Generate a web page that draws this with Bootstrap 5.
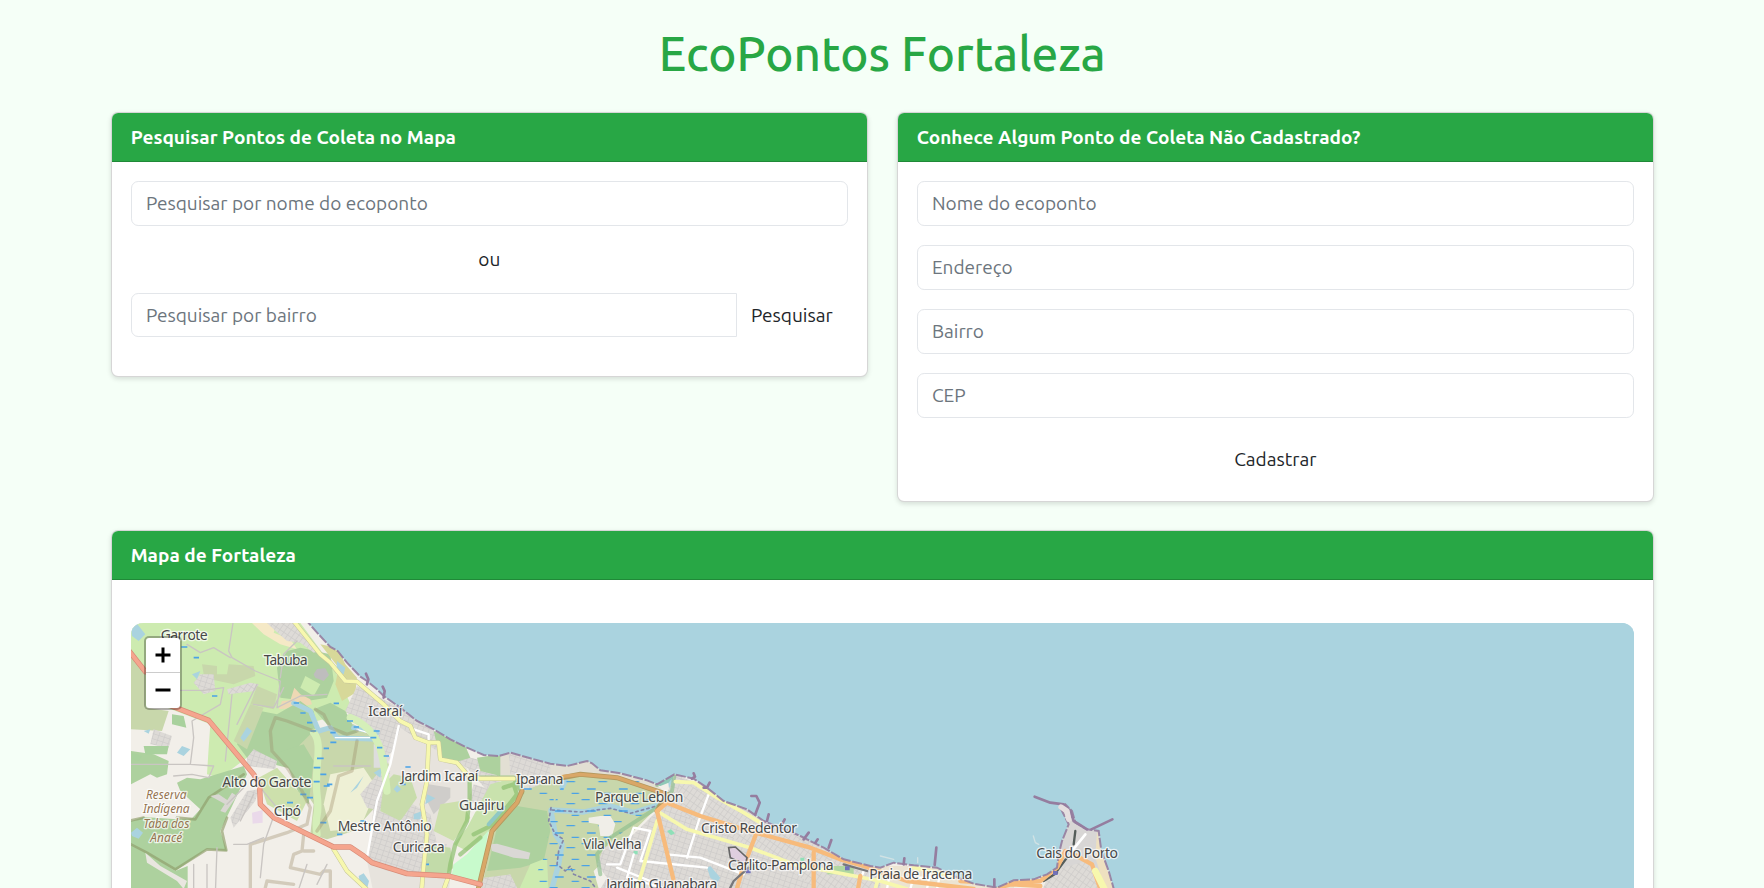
<!DOCTYPE html>
<html lang="pt-BR">
<head>
<meta charset="utf-8">
<meta name="viewport" content="width=device-width, initial-scale=1">
<title>EcoPontos Fortaleza</title>
<link rel="stylesheet" href="https://cdn.jsdelivr.net/npm/bootstrap@5.3.0/dist/css/bootstrap.min.css">
<style>
html{font-size:19.05px}
body{background:#f5fff7;font-family:Ubuntu,"Noto Sans",sans-serif;height:100vh;overflow:hidden;padding:25px 0 0 .6px;color:#212529}
.container{max-width:1572px}
h1{color:#28a745;font-size:2.505rem;margin-bottom:30.2px}
.card{border-color:rgba(0,0,0,.16);box-shadow:0 2px 5px rgba(0,0,0,.13)}
.card-header{background:#28a745;color:#fff;font-weight:600;letter-spacing:.03px}
.form-control{border-color:#e3e6ea}
.form-control::placeholder{color:#6c757d}
.map-box{height:595px;margin-top:24px;border-radius:12px;overflow:hidden;position:relative;background:#aad3df}
.map-box>svg{display:block;width:100%;height:266px;overflow:visible}
.zoom-ctl{position:absolute;left:13px;top:13px;width:38px;border:2px solid rgba(0,0,0,.28);border-radius:5px;background-clip:padding-box;background-color:#fff}
.zoom-ctl button{display:flex;align-items:center;justify-content:center;width:100%;height:35px;padding:0;border:0;background:none}
.zoom-ctl button:first-child{border-bottom:1px solid #ccc}
.place{font:42px "Noto Sans",sans-serif;fill:#484848;stroke:#fff;stroke-opacity:.7;stroke-width:8;paint-order:stroke;stroke-linejoin:round}
.place.reserve{font-size:36px;font-style:italic;fill:#967552}
.ln{fill:none;stroke-linecap:round;stroke-linejoin:round}
</style>
</head>
<body>
<main class="container">
<h1 class="text-center">EcoPontos Fortaleza</h1>
<div class="row">
 <div class="col-md-6">
  <div class="card">
   <div class="card-header">Pesquisar Pontos de Coleta no Mapa</div>
   <div class="card-body">
    <input class="form-control mb-3" placeholder="Pesquisar por nome do ecoponto">
    <p class="text-center mb-3">ou</p>
    <div class="input-group mb-3">
     <input class="form-control" placeholder="Pesquisar por bairro">
     <button class="btn" type="button">Pesquisar</button>
    </div>
   </div>
  </div>
 </div>
 <div class="col-md-6">
  <div class="card">
   <div class="card-header">Conhece Algum Ponto de Coleta Não Cadastrado?</div>
   <div class="card-body">
    <input class="form-control mb-3" placeholder="Nome do ecoponto">
    <input class="form-control mb-3" placeholder="Endereço">
    <input class="form-control mb-3" placeholder="Bairro">
    <input class="form-control mb-3" placeholder="CEP">
    <button class="btn w-100" type="button">Cadastrar</button>
   </div>
  </div>
 </div>
</div>
<div class="card mt-4">
 <div class="card-header">Mapa de Fortaleza</div>
 <div class="card-body">
  <div class="map-box">
<svg viewBox="92 336 4510 798" preserveAspectRatio="none">
<defs>
 <pattern id="streets" width="17" height="15" patternUnits="userSpaceOnUse" patternTransform="rotate(18)"><rect width="17" height="15" fill="#dddad6"/><path d="M0 0H17M0 0V15" stroke="#cdcbc9" stroke-width="4"/></pattern>
 <pattern id="streets2" width="14" height="19" patternUnits="userSpaceOnUse" patternTransform="rotate(35)"><rect width="14" height="19" fill="#dedbd7"/><path d="M0 0H14M0 0V19" stroke="#cdcbc9" stroke-width="4"/></pattern>
 <pattern id="marsh" width="96" height="66" patternUnits="userSpaceOnUse"><path d="M4 8H28M54 20H80M20 42H46M70 55H92" stroke="#4aa2e6" stroke-width="4"/></pattern>
 <clipPath id="coast"><path id="coastline" d="M60 300H592L625 336 655 370 690 408 712 420 740 455 780 497 800 510 830 535 850 555 900 590 950 630 1000 655 1050 685 1100 710 1150 732 1195 735 1230 725 1290 742 1350 758 1400 765 1460 750 1475 757 1500 778 1560 787 1640 808 1670 820 1722 790 1780 803 1820 830 1870 870 1940 895 1990 930 2040 950 2100 975 2170 1010 2230 1045 2310 1065 2340 1070 2380 1055 2440 1063 2510 1070 2560 1095 2620 1118 2690 1130 2740 1108 2800 1105 2840 1090 2870 1070 2875 1030 2885 990 2905 940 2880 890 2895 880 2915 900 2925 935 2960 955 2995 960 3003 1020 3025 1080 3045 1150H60Z"/></clipPath>
</defs>
<rect x="92" y="336" width="4510" height="798" fill="#aad3df"/>
<g clip-path="url(#coast)">
 <rect x="60" y="300" width="3100" height="850" fill="#f2efe9"/>
 <!-- western fields and woods -->
 <path d="M92 336H600L700 470 760 600 540 660 440 740 360 800 320 790 325 710 330 640 200 590H92Z" fill="#cdebb0"/>
 <path d="M92 430L135 490V590L205 600 185 660 92 655Z" fill="#c8d7ab"/>
 <path d="M455 336H530L520 365 570 385 590 415 540 400 490 370Z" fill="#f5e9c6"/>
 <path d="M530 470L560 420 600 410 690 430 700 510 680 560 620 570 540 560Z" fill="#add19e"/>
 <path d="M600 530L615 495 660 520 640 555Z" fill="#cdebb0"/>
 <path d="M640 490L650 474 675 472 686 492 670 510 645 500Z" fill="#bebdbd"/>
 <path d="M535 595L545 570 570 568 582 530 600 550 630 565 635 580 590 590Z" fill="#eed8b4"/>
 <path d="M305 460L350 465 350 490 380 490 385 460 460 465 465 495 400 520 330 505 310 490Z" fill="#c8d7ab"/>
 <path d="M300 490H340L345 540 310 550 280 515Z" fill="url(#streets)"/>
 <path d="M380 535L450 515 475 520 465 540 385 550Z" fill="url(#streets2)"/>
 <path d="M470 525L530 550 520 595 450 580Z" fill="#c8d7ab"/>
 <path d="M440 640L480 600 530 610 600 570 640 600 650 660 640 740 600 790 560 770 440 740 410 700Z" fill="#add19e"/>
 <path d="M400 690L450 580 490 590 440 715Z" fill="#c8d7ab"/>
 <path d="M640 660L760 640 850 700 870 780 860 850 760 960 680 985 630 970 640 880 560 760 600 700Z" fill="#c8d7ab"/>
 <path d="M640 595L690 575 735 600 770 665 730 675 680 640Z" fill="#add19e"/>
 <path d="M520 730L610 700 640 750 625 880 600 860 560 760Z" fill="#add19e"/>
 <path d="M475 800L530 770 620 870 590 930 500 880Z" fill="#cde0ac"/>
 <path d="M690 790L790 770 830 830 780 950 690 960 670 880Z" fill="#eef0d5"/>
 <path d="M820 700H850L870 740 855 770H820Z" fill="#dddddd"/>
 <path d="M500 336H590L660 420 640 425 600 395 560 390 515 350Z" fill="url(#streets2)"/>
 <path d="M660 400L710 410 735 460 770 500 765 545 725 570 705 520 715 470Z" fill="#d7d899"/>
 <path d="M710 450L735 470 730 490 708 480Z" fill="#aad3df"/>
 <path d="M770 525L900 590 1000 660 1110 740 1195 760 1200 850 1170 850 1100 770 1000 760 960 690 900 690 860 740 780 640 735 600Z" fill="url(#streets)"/>
 <path d="M900 650L960 690 1100 770 1110 870 1060 990 1045 1150H820L800 1050 840 850Z" fill="#e7e3dd"/>
 <path d="M780 850L830 790 870 780 845 900 800 890Z" fill="url(#streets)"/>
 <path d="M820 890L920 870 990 910 1010 1000 1040 1000 1020 1090 860 1080 800 1050Z" fill="url(#streets)"/>
 <path d="M850 820L880 790 930 800 950 860 900 930 840 900Z" fill="#c8dcab"/>
 <path d="M1000 660L1095 705 1110 740 1060 755 1020 745Z" fill="#add19e"/>
 <path d="M985 820L1050 830 1050 860 1000 910 975 860Z" fill="#cfcdca"/>
 <path d="M1020 880L1080 870 1110 920 1060 990 1000 960Z" fill="#cde0ac"/>
 <path d="M1120 820L1170 835 1160 870 1100 880Z" fill="url(#streets)"/>
 <path d="M980 1000L1050 1010 1060 1070 1030 1095 965 1085Z" fill="#c2dba9"/>
 <!-- indigenous reserve -->
 <path d="M92 720L160 730 205 750 200 790 170 800 150 790 92 820ZM230 815L260 800 300 805 430 765 440 790 360 960 380 1020 320 1015 225 1080 140 1030 92 1000V930L130 918 230 925 275 922 300 895 240 840Z" fill="#add19e"/>
 <path d="M92 1000L140 1025 225 1080 262 1065 262 1150H92Z" fill="#add19e"/>
 <path class="ln" d="M92 928L130 920M230 920L285 925 325 860 430 790M92 1000L140 1025 225 1075 320 1015 378 1018 365 960 380 920" stroke="#8f9d6a" stroke-opacity=".65" stroke-width="8"/>
 <path d="M160 655L215 675 205 710 150 700ZM440 740L460 715 530 750 525 775 440 765ZM390 920L440 840 475 835 465 870 400 950Z" fill="url(#streets)"/>
 <path d="M330 855L355 850 385 870 375 880ZM360 900L395 845 410 855 375 905Z" fill="#d9d7d2"/>
 <path d="M135 1025L180 1065 260 1110 250 1134 230 1110 140 1055Z" fill="#e9e6e0"/>
 <path d="M215 610L250 615 258 650 215 640ZM130 705H205L200 730 135 730ZM95 725L125 735 115 750 95 745Z" fill="#a9d19d"/>
 <path d="M455 905L487 897 487 935 457 938Z" fill="#ead9ea"/>
 <path d="M92 350L110 338 135 370 115 390 95 375ZM275 490L300 480 290 505ZM420 680L440 648 455 660 430 692ZM230 725L245 705 270 715 250 735ZM92 965L110 950 128 965 115 983 95 975ZM130 660L150 655 145 668ZM820 785L845 770 840 800ZM940 910L965 900 960 925 940 925ZM975 880L980 850 1005 862ZM880 835L890 822 903 835 890 845ZM775 1095L790 1087 806 1110 800 1134 780 1120ZM750 845L790 795 770 830Z" fill="#aad3df"/>
 <!-- lagoon -->
 <path class="ln" d="M580 576L630 600 655 660 690 650 710 680 830 685M760 650L830 665" stroke="#aad3df" stroke-width="15"/>
 <path class="ln" d="M705 680H830M770 655L820 670" stroke="#fff" stroke-width="4"/>
 <path class="ln" d="M640 665C670 700 640 770 650 850S640 900 650 970M750 620C850 660 850 750 860 840" stroke="#d5efb9" stroke-width="22"/>
 <path d="M580 576h16M600 606h16M620 635h16M630 660h18M690 694h18M670 712h16M650 742h20M640 770h20M660 790h18M640 812h18M670 825h18M600 850h18M560 875h18M620 860h18M660 935h18M710 970h16M820 660h18M810 680h18M830 710h16M850 735h16M690 665h16M740 630h18M760 648h16M280 440h16M243 408h18M335 555h16M700 577h16M680 820h16M780 930h16M900 820h16M915 768h16M970 1060h16" stroke="#4aa2e6" stroke-width="5"/>
 <!-- wooded ridge outline -->
 <path class="ln" d="M645 595L670 610 690 650 740 670 770 660M515 720L510 660 525 620 560 630 640 660M515 720L560 770 600 830 630 890 620 940 560 965 450 1000V1150M770 690L755 780 715 795 690 900 650 960M610 970L605 1020 580 1030 570 1070 660 1090 670 1080H690V1150M490 1150L500 1110 580 1120M610 1020L640 1020" stroke="#9a8a68" stroke-opacity=".35" stroke-width="10"/>
 <!-- green belt and mangrove -->
 <path d="M1130 740L1210 728 1215 775 1200 795 1140 780Z" fill="#add19e"/>
 <path d="M1200 728L1480 755 1650 805 1700 850 1400 800 1360 870 1290 880 1200 800Z" fill="#e2dfd3"/>
 <path d="M1225 725L1350 760 1350 795 1230 790ZM1290 810L1380 800 1370 860 1280 870Z" fill="url(#streets)"/>
 <path d="M1170 820L1240 800 1260 870 1180 950 1100 1020 1060 1000 1100 950Z" fill="#c9e2ad"/>
 <path d="M1360 805L1440 790 1560 800 1680 850 1660 900 1560 1000 1480 1080 1500 1150H1140L1180 960 1270 840Z" fill="#c8d7ab"/>
 <path d="M1190 950L1250 885 1340 900 1350 960 1330 1050 1260 1070 1160 1080Z" fill="#add19e"/>
 <path d="M1170 1000L1190 998 1290 1025 1285 1045 1240 1040 1175 1020Z" fill="#dad8d5"/>
 <path d="M1290 1060L1340 1040 1345 1150H1250Z" fill="#cdebb0"/>
 <path d="M1165 958L1100 1030 1060 1060 1052 1104 1138 1113Z" fill="#c8facc"/>
 <path class="ln" d="M1108 800V860L1100 930 1065 1000 1050 1060 1045 1095M1140 800L1240 800 1265 845M1210 830L1240 820 1250 850 1180 940 1120 970M1140 980L1080 1030" stroke="#8dc06f" stroke-opacity=".7" stroke-width="13"/>
 <path class="ln" d="M1165 940L1210 890" stroke="#8fc8c4" stroke-width="12"/>
 <path d="M1150 1100L1230 1090 1260 1150H1140Z" fill="url(#streets)"/>
 <path class="ln" d="M1352 897L1450 903 1530 885 1600 905 1680 880 1715 840 1710 800M1352 900L1365 970 1385 1000 1375 1060 1350 1150M1385 830L1395 810" stroke="#aad3df" stroke-width="16"/>
 <path class="ln" d="M1355 897L1440 903 1530 892 1590 907 1680 882M1352 890L1345 930 1365 970 1390 985 1375 1020 1370 1060 1395 1080 1410 1065 1420 1090 1470 1110 1500 1150" stroke="#8486a8" stroke-width="5" stroke-dasharray="7 10"/>
 <path d="M1260 800H1360V870H1300L1240 840ZM1390 810H1660V860L1640 900 1560 970 1480 1060 1500 1150H1280L1330 1040 1360 880Z" fill="url(#marsh)"/>
 <path d="M1465 920L1500 915 1530 915 1545 940 1535 975 1500 975 1495 940 1465 935Z" fill="#f0eee8"/>
 <!-- Fortaleza urban area -->
 <path d="M1725 790L1820 830 2040 950 2340 1068 2550 1090 2740 1108 2740 1150H1490L1520 1100 1490 1060 1510 1010 1600 970 1680 890Z" fill="url(#streets)"/>
 <path d="M1740 810L2040 955 2330 1085 2320 1150H2180L1960 1010 1720 900Z" fill="url(#streets2)"/>
 <path class="ln" d="M1670 822L1722 793 1715 840 1670 890 1530 980 1490 1030 1500 1090" stroke="#8dbf8d" stroke-opacity=".65" stroke-width="12"/>
 <path d="M1670 820L1722 792 1705 815 1680 825Z" fill="#8ec8b7"/>
 <path d="M1700 960l12-5 12 12-12 6ZM1600 1020h12v10h-12ZM1895 855h12v8h-12ZM2100 1040h12v10h-12Z" fill="#8fe0b8"/>
 <path d="M1820 1070L1830 1065 1860 1100 1850 1115 1830 1100Z" fill="#aad3df"/>
 <path d="M2190 1065H2260V1090H2180Z" fill="#b0d7a1"/>
 <path d="M2340 1065H2540L2740 1110V1150H2340Z" fill="#ece4d2"/>
 <path d="M2880 890L2905 890 2950 950 2995 960 3020 1080 3045 1150H2820L2870 1070Z" fill="#d8d6d5"/>
 <path d="M2850 1080L2960 1050 3015 1150H2820Z" fill="url(#streets2)"/>
 <path d="M2990 960L3005 1030 3045 1150H3020L2985 1040Z" fill="#eee0c0"/>
 <path class="ln" d="M2925 960L2920 1000M2870 1080L2900 1040M2830 1110L2870 1085" stroke="#555d5a" stroke-width="7"/>
 <path class="ln" d="M2955 970L2915 1020" stroke="#fff" stroke-width="8"/>
 <!-- small lanes -->
 <path class="ln" d="M398 336L385 420 395 440 465 480 540 510 530 590M260 400L300 425 340 410 390 440M240 538H310L370 530 360 580 275 630 280 680 270 760 340 765 325 800 275 790 220 795M470 520L410 640M395 550L375 750M92 760H270M530 590L600 555 680 550M460 580L520 590 550 530M540 500L550 430 590 390M480 1100L490 1000 515 930 530 890 480 830M400 1000L440 1000 490 980M280 1150V1060M320 1150V1060M345 1150L350 1010M700 765H810M420 930L460 850M380 880L430 830M590 1150L620 1060M650 1120L680 1060" stroke="#c9c5c2" stroke-width="4"/>
 <path class="ln" d="M895 645L870 760 830 870 800 1040M940 655L985 670V700M1825 850L1795 930 1760 1040M1600 950L1560 1060 1520 1060M1600 950L1650 960 1620 1050 1820 1070M1600 1030L1580 1100 1700 1134M1550 1070L1650 1110M1700 1030L1800 1040 1930 1090M2430 1134L2445 1080M2480 1134L2490 1080M2510 1134L2520 1085M2360 1134L2370 1080M2270 1134L2290 1080M2400 1100H2540" stroke="#fff" stroke-width="7"/>
 <!-- secondary roads -->
 <path class="ln" d="M580 330L660 430 690 455 735 510 770 512 850 580 900 630 930 645 945 680 985 695 1015 695 1020 745 1070 755 1100 790 1140 803 1240 803M985 695L980 810 965 880 980 970 968 1085 963 1150M700 1015L740 1080 815 1150M1045 1095L1025 1150" stroke="#c5c59a" stroke-width="14"/>
 <path class="ln" d="M580 330L660 430 690 455 735 510 770 512 850 580 900 630 930 645 945 680 985 695 1015 695 1020 745 1070 755 1100 790 1140 803 1240 803M985 695L980 810 965 880 980 970 968 1085 963 1150M700 1015L740 1080 815 1150M1045 1095L1025 1150M1725 812L1780 815 1850 860 1930 905 1980 935M1670 900L1760 955 1950 1010 2080 1060 2340 1110 2420 1134M1670 930L1605 1150M2340 1080L2320 1150M2440 1070L2560 1095" stroke="#f7f8ae" stroke-width="11"/>
 <!-- primary and trunk roads -->
 <path class="ln" d="M1385 800L1440 790 1550 800 1700 850 1670 900M1265 840L1250 875 1175 960 1130 1150" stroke="#b5995e" stroke-width="15"/>
 <path class="ln" d="M1265 840L1250 875 1175 960 1130 1150M1385 797L1440 790 1550 800 1700 850" stroke="#d9a768" stroke-width="10"/>
 <path class="ln" d="M1700 875L1800 915 1930 955 2130 1010 2220 1045 2290 1065 2420 1110 2620 1134M1670 900L1730 1150M1670 900L1700 875M1965 975L1925 1080 1905 1150M2140 1025V1150M2280 1095L2270 1150M2680 1134L2750 1115 2820 1110 2870 1070 2895 1020M2920 1030L2975 1060 3005 1150M2580 1110L2820 1125" stroke="#f7bb7c" stroke-width="13"/>
 <path class="ln" d="M88 422L135 482M200 580L325 628 460 790 478 825 480 880 520 920 700 1008 750 1008 790 1035 815 1055 920 1088 1045 1095 1140 1120" stroke="#d88b77" stroke-width="16"/>
 <path class="ln" d="M88 422L135 482M200 580L325 628 460 790 478 825 480 880 520 920 700 1008 750 1008 790 1035 815 1055 920 1088 1045 1095 1140 1120" stroke="#f5a58e" stroke-width="12"/>
 <path class="ln" d="M2985 1080L3020 1150" stroke="#f7f8ae" stroke-width="20"/>
 <path d="M1885 1010L1905 1008 1940 1040 1935 1060 1890 1040Z" fill="#dfcedf" stroke="#666" stroke-width="5"/>
 <path class="ln" d="M1945 1070L1900 1110 1880 1150M2230 1060L2300 1080" stroke="#77777a" stroke-width="7"/>
</g>
<!-- shoreline, jetties and the port breakwater -->
<use href="#coastline" fill="none" stroke="#957d9f" stroke-opacity=".9" stroke-width="6" stroke-dasharray="30 5"/>
<path class="ln" d="M797 488L804 505 800 520M847 527L853 540 850 560M1780 787L1784 797 1775 803M1828 815L1820 830 1810 830M1953 855L1968 855 1978 875 1965 910M2005 910L2000 930M2053 925L2045 940M2125 965L2110 985M2152 985L2145 995M2193 987L2185 1010M2508 1010L2503 1062M2412 1042L2410 1060M2682 1105V1125M2803 857L2850 875 2890 880 2910 900 2920 930 2960 955M2973 955L3036 925" stroke="#957d9f" stroke-width="8"/>
<path class="ln" d="M2882 888L2900 900 2905 925" stroke="#e5dfe0" stroke-width="16"/>
<path class="ln" d="M2799 975L2805 995 2815 1000M2340 1035L2380 1045M2452 1040V1055" stroke="#d1e2e4" stroke-width="4"/>
<path d="M1937 1075h14v12h-14ZM2234 1066h14v12h-14ZM2858 1080h14v12h-14Z" fill="#7171b8"/>
<g class="place">
 <text x="181" y="386" textLength="141">Garrote</text>
 <text x="490" y="463" textLength="132">Tabuba</text>
 <text x="804" y="615" textLength="102">Icaraí</text>
 <text x="366" y="828" textLength="267">Alto do Garote</text>
 <text x="520" y="914" textLength="82">Cipó</text>
 <text x="902" y="811" textLength="232">Jardim Icaraí</text>
 <text x="1076" y="898" textLength="136">Guajiru</text>
 <text x="712" y="961" textLength="282">Mestre Antônio</text>
 <text x="877" y="1023" textLength="156">Curicaca</text>
 <text x="1247" y="818" textLength="142">Iparana</text>
 <text x="1484" y="874" textLength="265">Parque Leblon</text>
 <text x="1448" y="1014" textLength="176">Vila Velha</text>
 <text x="1518" y="1134" textLength="333">Jardim Guanabara</text>
 <text x="1802" y="966" textLength="288">Cristo Redentor</text>
 <text x="1883" y="1076" textLength="317">Carlito-Pamplona</text>
 <text x="2307" y="1103" textLength="309">Praia de Iracema</text>
 <text x="2808" y="1040" textLength="245">Cais do Porto</text>
</g>
<g class="place reserve" text-anchor="middle">
 <text x="198" y="864" textLength="122">Reserva</text>
 <text x="198" y="907" textLength="140">Indígena</text>
 <text x="198" y="950" textLength="138">Taba dos</text>
 <text x="198" y="992" textLength="96">Anacé</text>
</g>
</svg>
   <div class="zoom-ctl">
    <button type="button" aria-label="Aproximar"><svg width="16" height="16"><path d="M0.5 8H15.5M8 .5V15.5" stroke="#000" stroke-width="3"/></svg></button>
    <button type="button" aria-label="Afastar"><svg width="16" height="16"><path d="M.5 8H15.5" stroke="#000" stroke-width="3"/></svg></button>
   </div>
  </div>
 </div>
</div>
</main>
<script src="https://cdn.jsdelivr.net/npm/bootstrap@5.3.0/dist/js/bootstrap.bundle.min.js"></script>
</body>
</html>
